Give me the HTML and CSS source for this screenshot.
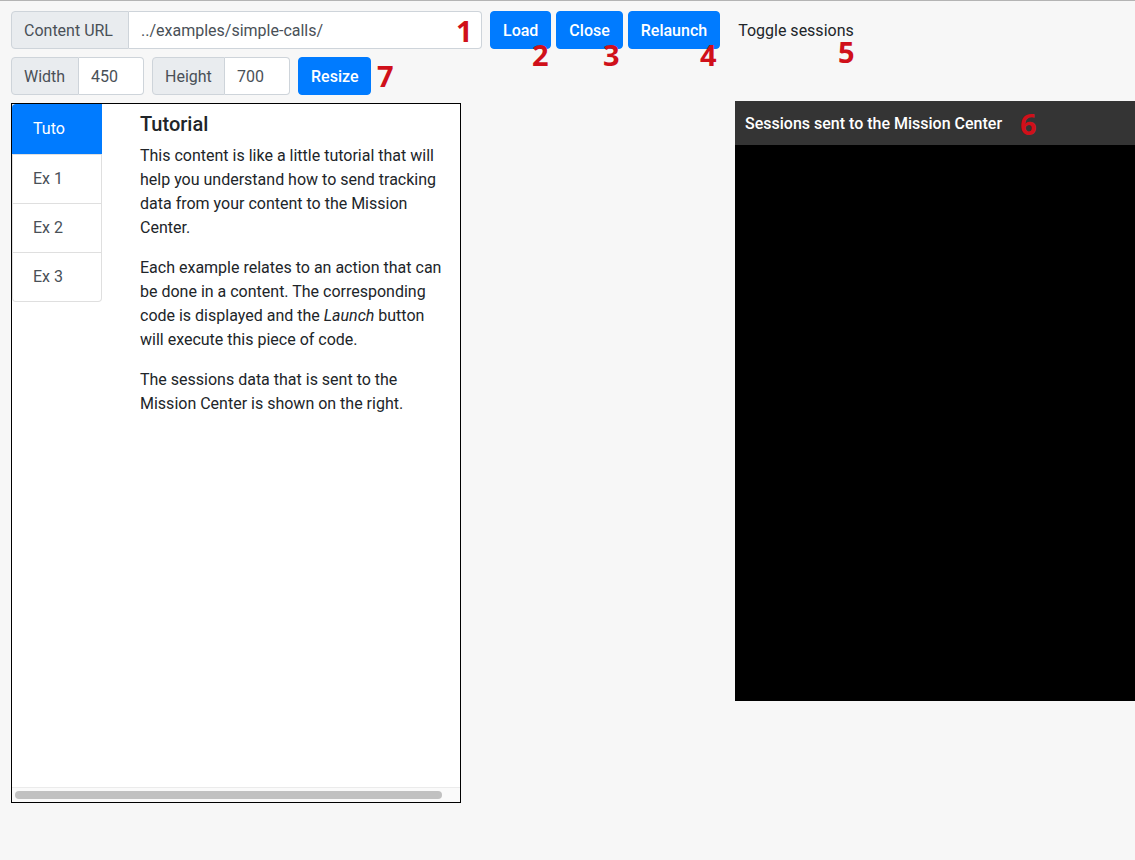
FILE: index.html
```html
<!DOCTYPE html>
<html>
<head>
<meta charset="utf-8">
<link rel="stylesheet" href="styles.css">
</head>
<body>
<div class="page">
  <div class="toolbar">
    <div class="row">
      <div class="input-group url-group">
        <span class="addon addon-url">Content URL</span>
        <span class="field url-field">../examples/simple-calls/</span>
      </div>
      <button class="btn">Load</button>
      <button class="btn">Close</button>
      <button class="btn">Relaunch</button>
      <button class="btn-link">Toggle sessions</button>
    </div>
    <div class="row row2">
      <div class="input-group">
        <span class="addon addon-w">Width</span>
        <span class="field num-field">450</span>
      </div>
      <div class="input-group">
        <span class="addon addon-h">Height</span>
        <span class="field num-field">700</span>
      </div>
      <button class="btn">Resize</button>
    </div>
  </div>

  <div class="main">
    <div class="frame">
      <div class="frame-body">
        <div class="list">
          <div class="item active">Tuto</div>
          <div class="item">Ex 1</div>
          <div class="item">Ex 2</div>
          <div class="item">Ex 3</div>
        </div>
        <div class="content">
          <h5 class="title">Tutorial</h5>
          <p>This content is like a little tutorial that will help you understand how to send tracking data from your content to the Mission Center.</p>
          <p>Each example relates to an action that can be done in a content. The corresponding code is displayed and the <em>Launch</em> button will execute this piece of code.</p>
          <p>The sessions data that is sent to the Mission Center is shown on the right.</p>
        </div>
      </div>
      <div class="hscroll"><div class="thumb"></div></div>
    </div>
    <div class="sessions">
      <div class="sessions-head">Sessions sent to the Mission Center</div>
      <div class="sessions-body"></div>
    </div>
  </div>

  <span class="mark m1">1</span>
  <span class="mark m2">2</span>
  <span class="mark m3">3</span>
  <span class="mark m4">4</span>
  <span class="mark m5">5</span>
  <span class="mark m6">6</span>
  <span class="mark m7">7</span>
</div>
</body>
</html>
```

FILE: styles.css
```css
* { box-sizing: border-box; }
html, body { margin: 0; padding: 0; }
body {
  background: #f7f7f7;
  font-family: Roboto, "Liberation Sans", sans-serif;
  color: #212529;
  width: 1135px;
  height: 860px;
  overflow: hidden;
}
.page {
  position: relative;
  height: 860px;
  border-top: 1px solid #b4b4b4;
}
.toolbar { padding: 10px 0 0 11px; }
.row { display: flex; align-items: center; height: 38px; }
.row2 { margin-top: 8px; gap: 8px; }
.input-group { display: flex; height: 38px; }
.addon {
  display: flex; align-items: center;
  padding: 0 12px;
  background: #e9ecef;
  border: 1px solid #ced4da;
  border-radius: 4px 0 0 4px;
  color: #495057;
  font-size: 16px;
}
.addon-url { width: 118px; }
.addon-w { width: 68px; }
.addon-h { width: 73px; }
.field {
  display: flex; align-items: center;
  padding: 0 12px;
  background: #fff;
  border: 1px solid #ced4da;
  border-left: none;
  border-radius: 0 4px 4px 0;
  color: #495057;
  font-size: 16px;
}
.url-field { width: 353px; }
.num-field { width: 65px; }
.btn {
  height: 38px;
  padding: 0 12px;
  background: #007bff;
  border: 1px solid #007bff;
  border-radius: 4px;
  color: #fff;
  font-family: inherit;
  font-size: 16px;
  font-weight: 500;
  margin-left: 5px;
}
.url-group + .btn { margin-left: 8px; }
.row2 .btn { margin-left: 0; }
.btn-link {
  height: 38px;
  padding: 0 12px;
  margin-left: 6px;
  background: none;
  border: none;
  color: #212529;
  font-family: inherit;
  font-size: 16px;
}
.main {
  display: flex;
  justify-content: space-between;
  align-items: flex-start;
  padding-left: 11px;
  margin-top: 6px;
}
.frame {
  margin-top: 2px;
  width: 450px;
  height: 700px;
  border: 1px solid #000;
  background: #fff;
  display: flex;
  flex-direction: column;
}
.frame-body { flex: 1; display: flex; align-items: flex-start; }
.list {
  width: 90px;
  border: 1px solid rgba(0,0,0,.125);
  border-top: none;
  border-radius: 0 0 4px 4px;
}
.item {
  height: 49px;
  padding: 12px 20px;
  line-height: 24px;
  font-size: 16px;
  color: #495057;
  border-top: 1px solid rgba(0,0,0,.125);
}
.item:first-child { border-top: none; height: 50px; padding-top: 13px; }
.item.active {
  background: #007bff;
  color: #fff;
  border-radius: 4px 0 0 0;
  margin: 0 -1px;
  padding-left: 21px;
}
.content {
  margin-left: 38px;
  width: 312px;
  padding-top: 8px;
}
.title {
  margin: 0 0 8px;
  font-size: 20px;
  font-weight: 500;
  line-height: 24px;
}
.content p {
  margin: 0 0 16px;
  font-size: 16px;
  line-height: 24px;
}
.hscroll {
  height: 15px;
  border-top: 1px solid #ebebeb;
  background: #fafafa;
  padding: 3px 0 0 3px;
}
.thumb {
  width: 427px;
  height: 8px;
  border-radius: 4px;
  background: #c1c1c1;
}
.sessions { width: 400px; height: 600px; display: flex; flex-direction: column; }
.sessions-head {
  height: 44px;
  background: #343434;
  color: #fff;
  font-size: 16px;
  font-weight: 500;
  padding: 0 10px;
  display: flex; align-items: center;
}
.sessions-body { flex: 1; background: #000; }
.mark {
  position: absolute;
  font-family: "Open Sans", sans-serif;
  font-weight: 700;
  font-size: 29px;
  line-height: 1;
  color: #d0101a;
}
.m1 { left: 456px; top: 15px; }
.m2 { left: 532px; top: 39px; }
.m3 { left: 603px; top: 39px; }
.m4 { left: 700px; top: 39px; }
.m5 { left: 838px; top: 36px; }
.m6 { left: 1020px; top: 108px; }
.m7 { left: 377px; top: 60px; }
```
